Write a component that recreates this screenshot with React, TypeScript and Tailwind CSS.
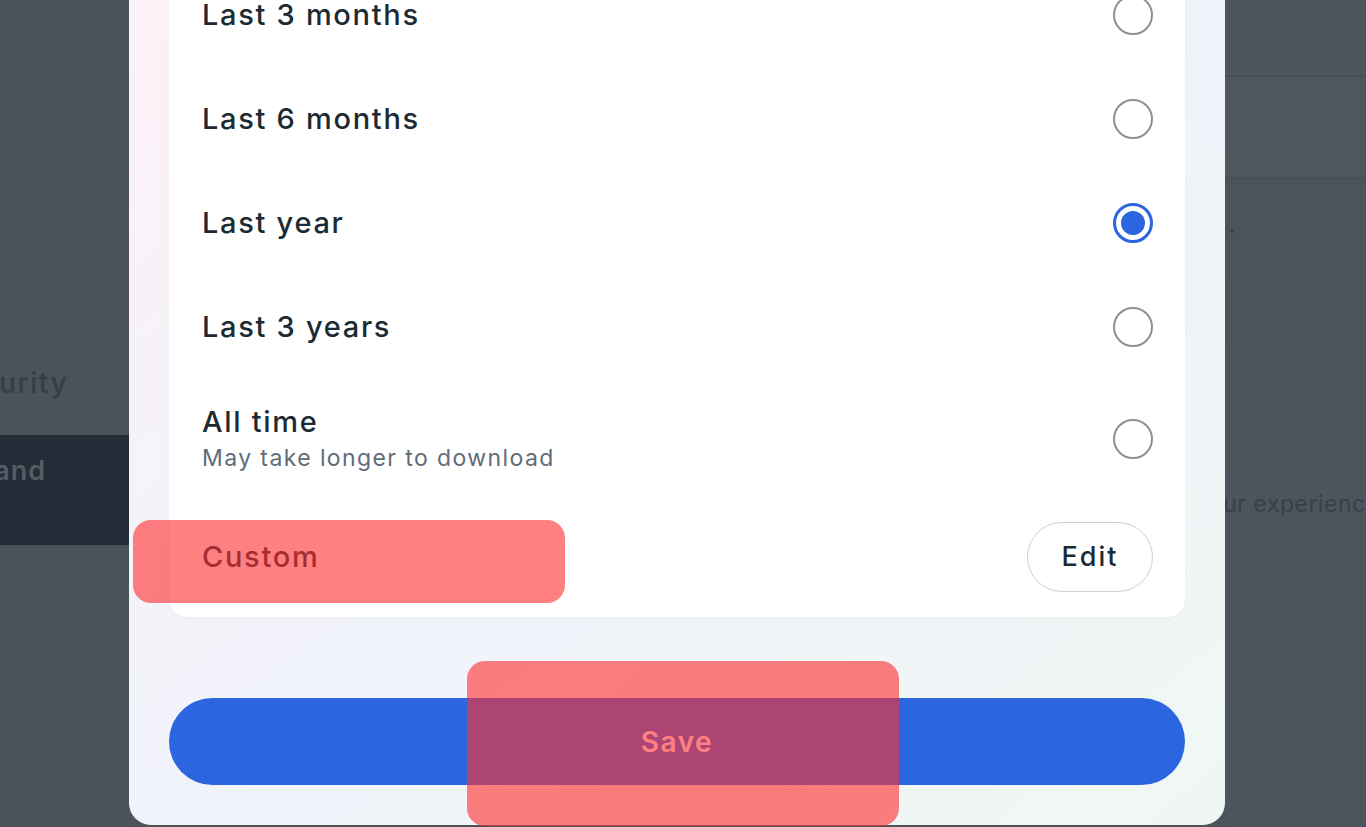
import React from "react";

const font = { fontFamily: "Inter, 'Open Sans', 'Liberation Sans', sans-serif" };

function Radio({ checked }: { checked?: boolean }) {
  if (checked) {
    return (
      <div className="w-[40px] h-[40px] rounded-full border-[3px] border-[#2b66e0] flex items-center justify-center shrink-0">
        <div className="w-[24px] h-[24px] rounded-full bg-[#2b66e0]" />
      </div>
    );
  }
  return <div className="w-[40px] h-[40px] rounded-full border-[2.5px] border-[#8d9096] shrink-0" />;
}

function Row({ label, checked }: { label: string; checked?: boolean }) {
  return (
    <div className="h-[104px] flex items-center justify-between">
      <span className="text-[29px] font-medium text-[#1c2b33] tracking-[1.7px]">{label}</span>
      <Radio checked={checked} />
    </div>
  );
}

export default function App() {
  return (
    <div className="relative w-[1366px] h-[827px] overflow-hidden bg-[#4b535b]" style={font}>
      {/* underlying page (dimmed) */}
      <div className="flex h-full">
        <div className="w-[129px] flex flex-col bg-[#4a525a]">
          <div className="h-[350px]" />
          <div className="h-[66px] flex items-center">
            <div className="w-[68px] flex justify-end whitespace-nowrap text-[28px] font-medium text-[#353d46] tracking-[1.5px]">
              Security
            </div>
          </div>
          <div className="h-[19px]" />
          <div className="h-[110px] bg-[#232c37] flex flex-col pt-[19px]">
            <div className="w-[46px] flex justify-end whitespace-nowrap text-[27px] font-semibold text-[#545c65] tracking-[1px] leading-[34px]">
              Brand
            </div>
          </div>
        </div>
        <div className="flex-1" />
        <div className="w-[141px] flex flex-col bg-[#4c545c]">
          <div className="h-[77px] border-b-2 border-[#464e56] bg-[#4d555d]" />
          <div className="h-[102px] border-b-2 border-[#474f57] bg-[#4e565e]" />
          <div className="h-[168px] border-b border-[#485058] bg-[#4b535b] relative">
            <span className="absolute left-[4px] top-[30px] text-[22px] text-[#333b44]">.</span>
          </div>
          <div className="h-[117px] border-b border-[#485058] bg-[#4d555c]" />
          <div className="h-[80px] flex items-center overflow-hidden whitespace-nowrap">
            <span className="text-[23px] text-[#394049] -ml-[29px] tracking-[0.5px]">your experience</span>
          </div>
        </div>
      </div>

      {/* modal */}
      <div className="absolute left-[129px] w-[1096px] bottom-[2px] rounded-b-[22px] bg-gradient-to-br from-[#fcf1f6] via-[#f1f3fb] to-[#eff7f3] px-[40px] pb-[40px]">
        <div className="bg-white rounded-b-[18px] px-[33px] pr-[32px] pb-[2px] shadow-[0_2px_6px_rgba(0,0,0,0.03)]">
          <Row label="Last 3 months" />
          <Row label="Last 6 months" />
          <Row label="Last year" checked />
          <Row label="Last 3 years" />
          <div className="h-[120px] flex items-center justify-between">
            <div className="flex flex-col">
              <span className="text-[29px] font-medium text-[#1c2b33] leading-[34px] tracking-[1.7px]">All time</span>
              <span className="text-[23px] text-[#5f6c7a] leading-[30px] mt-[4px] tracking-[1.4px]">May take longer to download</span>
            </div>
            <Radio />
          </div>
          <div className="h-[116px] flex items-center justify-between">
            <span className="text-[29px] font-medium text-[#1c2b33] tracking-[1.7px]">Custom</span>
            <button className="h-[70px] w-[126px] rounded-full border border-[#cbd0d6] text-[27px] font-medium text-[#1c2b33] bg-white tracking-[2px]">
              Edit
            </button>
          </div>
        </div>
        <div className="h-[81px]" />
        <button className="w-full h-[87px] rounded-full bg-[#2b66e0] text-white text-[28px] font-semibold tracking-[1.5px]">Save</button>
      </div>

      {/* highlight overlays */}
      <div className="absolute left-[133px] top-[520px] w-[432px] h-[83px] rounded-[18px] bg-[rgba(255,48,48,0.61)]" />
      <div className="absolute left-[467px] top-[661px] w-[432px] h-[165px] rounded-[18px] bg-[rgba(255,48,48,0.61)]" />
    </div>
  );
}
